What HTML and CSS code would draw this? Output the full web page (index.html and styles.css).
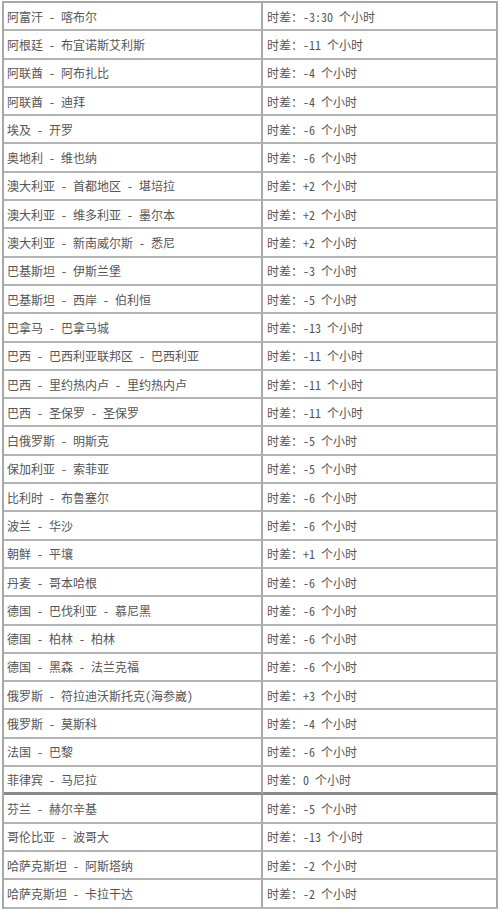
FILE: index.html
```html
<!DOCTYPE html>
<html lang="zh-CN">
<head>
<meta charset="utf-8">
<title>时差表</title>
<link rel="stylesheet" href="styles.css">
</head>
<body>
<div class="table">
  <div class="row"><div class="cell city">阿富汗 - 喀布尔</div><div class="cell diff">时差：-3:30 个小时</div></div>
  <div class="row"><div class="cell city">阿根廷 - 布宜诺斯艾利斯</div><div class="cell diff">时差：-11 个小时</div></div>
  <div class="row"><div class="cell city">阿联酋 - 阿布扎比</div><div class="cell diff">时差：-4 个小时</div></div>
  <div class="row"><div class="cell city">阿联酋 - 迪拜</div><div class="cell diff">时差：-4 个小时</div></div>
  <div class="row"><div class="cell city">埃及 - 开罗</div><div class="cell diff">时差：-6 个小时</div></div>
  <div class="row"><div class="cell city">奥地利 - 维也纳</div><div class="cell diff">时差：-6 个小时</div></div>
  <div class="row"><div class="cell city">澳大利亚 - 首都地区 - 堪培拉</div><div class="cell diff">时差：+2 个小时</div></div>
  <div class="row"><div class="cell city">澳大利亚 - 维多利亚 - 墨尔本</div><div class="cell diff">时差：+2 个小时</div></div>
  <div class="row"><div class="cell city">澳大利亚 - 新南威尔斯 - 悉尼</div><div class="cell diff">时差：+2 个小时</div></div>
  <div class="row"><div class="cell city">巴基斯坦 - 伊斯兰堡</div><div class="cell diff">时差：-3 个小时</div></div>
  <div class="row"><div class="cell city">巴基斯坦 - 西岸 - 伯利恒</div><div class="cell diff">时差：-5 个小时</div></div>
  <div class="row"><div class="cell city">巴拿马 - 巴拿马城</div><div class="cell diff">时差：-13 个小时</div></div>
  <div class="row"><div class="cell city">巴西 - 巴西利亚联邦区 - 巴西利亚</div><div class="cell diff">时差：-11 个小时</div></div>
  <div class="row"><div class="cell city">巴西 - 里约热内卢 - 里约热内卢</div><div class="cell diff">时差：-11 个小时</div></div>
  <div class="row"><div class="cell city">巴西 - 圣保罗 - 圣保罗</div><div class="cell diff">时差：-11 个小时</div></div>
  <div class="row"><div class="cell city">白俄罗斯 - 明斯克</div><div class="cell diff">时差：-5 个小时</div></div>
  <div class="row"><div class="cell city">保加利亚 - 索菲亚</div><div class="cell diff">时差：-5 个小时</div></div>
  <div class="row"><div class="cell city">比利时 - 布鲁塞尔</div><div class="cell diff">时差：-6 个小时</div></div>
  <div class="row"><div class="cell city">波兰 - 华沙</div><div class="cell diff">时差：-6 个小时</div></div>
  <div class="row"><div class="cell city">朝鲜 - 平壤</div><div class="cell diff">时差：+1 个小时</div></div>
  <div class="row"><div class="cell city">丹麦 - 哥本哈根</div><div class="cell diff">时差：-6 个小时</div></div>
  <div class="row"><div class="cell city">德国 - 巴伐利亚 - 慕尼黑</div><div class="cell diff">时差：-6 个小时</div></div>
  <div class="row"><div class="cell city">德国 - 柏林 - 柏林</div><div class="cell diff">时差：-6 个小时</div></div>
  <div class="row"><div class="cell city">德国 - 黑森 - 法兰克福</div><div class="cell diff">时差：-6 个小时</div></div>
  <div class="row"><div class="cell city">俄罗斯 - 符拉迪沃斯托克(海参崴)</div><div class="cell diff">时差：+3 个小时</div></div>
  <div class="row"><div class="cell city">俄罗斯 - 莫斯科</div><div class="cell diff">时差：-4 个小时</div></div>
  <div class="row"><div class="cell city">法国 - 巴黎</div><div class="cell diff">时差：-6 个小时</div></div>
  <div class="row break"><div class="cell city">菲律宾 - 马尼拉</div><div class="cell diff">时差：0 个小时</div></div>
  <div class="row"><div class="cell city">芬兰 - 赫尔辛基</div><div class="cell diff">时差：-5 个小时</div></div>
  <div class="row"><div class="cell city">哥伦比亚 - 波哥大</div><div class="cell diff">时差：-13 个小时</div></div>
  <div class="row"><div class="cell city">哈萨克斯坦 - 阿斯塔纳</div><div class="cell diff">时差：-2 个小时</div></div>
  <div class="row"><div class="cell city">哈萨克斯坦 - 卡拉干达</div><div class="cell diff">时差：-2 个小时</div></div>
</div>
</body>
</html>
```

FILE: styles.css
```css
html, body {
  margin: 0;
  padding: 0;
  background: #ffffff;
}

body {
  padding: 1px 2px 0 2px;
  font-family: "Noto Sans Mono CJK SC", "Liberation Mono", "Noto Sans CJK SC", monospace;
  font-size: 12px;
  color: #555555;
}

.table {
  display: grid;
  grid-auto-rows: 28.3px;
  width: 496px;
  border-top: 2px solid #a8a8a8;
  border-left: 2px solid #a8a8a8;
  box-sizing: border-box;
}

.row {
  display: grid;
  grid-template-columns: 259px 1fr;
}

.cell {
  display: flex;
  align-items: center;
  border-right: 2px solid #a8a8a8;
  border-bottom: 2px solid #b4b4b4;
  white-space: nowrap;
  overflow: hidden;
}

.city {
  padding-left: 3px;
}

.diff {
  padding-left: 4px;
}

.break .cell {
  border-bottom: 3px solid #8a8a8a;
}
```
